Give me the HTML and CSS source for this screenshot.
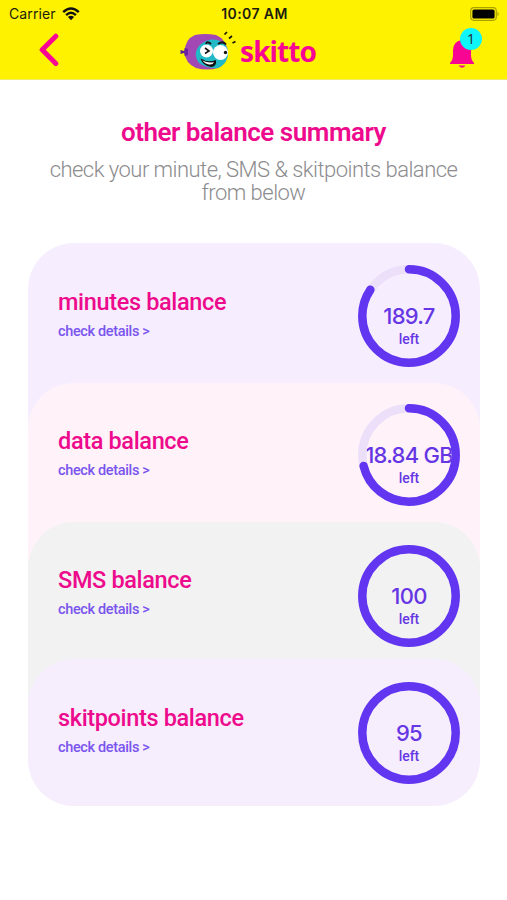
FILE: index.html
```html
<!DOCTYPE html>
<html lang="en">
<head>
<meta charset="utf-8">
<title>skitto – other balance summary</title>
<link rel="stylesheet" href="styles.css">
</head>
<body>
<header class="top">
  <div class="status">
    <div class="carrier"><span>Carrier</span>
      <svg width="18" height="14" viewBox="0 0 18 14"><g fill="none" stroke="#111" stroke-width="2.4"><path d="M1.2 5.2Q9-2.2 16.8 5.2"/><path d="M4.1 8.1Q9 3.5 13.9 8.1"/></g><path d="M5.9 10Q9 7.4 12.1 10L9 13.2Z" fill="#111"/></svg>
    </div>
    <span class="clock">10:07 AM</span>
    <svg class="battery" width="30" height="14" viewBox="0 0 30 14"><rect x=".7" y=".7" width="25.6" height="12.6" rx="3.2" fill="none" stroke="#aaa000" stroke-width="1.2"/><rect x="2.4" y="2.4" width="22.2" height="9.2" rx="1.6" fill="#000"/><path d="M27.5 4.5Q30 7 27.5 9.5Z" fill="#aaa000"/></svg>
  </div>
  <nav class="nav">
    <svg class="back" width="20" height="34" viewBox="0 0 20 34"><path d="M16.8 3.2L3.2 16.8L16.8 30.4" fill="none" stroke="#f90594" stroke-width="5" stroke-linecap="round" stroke-linejoin="round"/></svg>
    <div class="brand">
      <svg width="58" height="42" viewBox="0 0 58 42">
        <path d="M4 21L.5 20V24L4 23L7 28L10 22L7 17Z" fill="#5b2093"/>
        <path d="M15 5Q25 3 36 5Q46 9 48 22Q47 34 38 38Q27 41 16 38Q5 33 4.500 22Q5 9 15 5Z" fill="#a347b5"/>
        <path d="M4.500 18L8 19V25L4.500 26Z" fill="#6a22a3"/>
        <path d="M20 15Q31 6 42 12Q49 17 48 25Q47 34 38 38Q27 39 19 33Q12 23 20 15Z" fill="#22b9c6"/>
        <circle cx="26.500" cy="21" r="6.500" fill="#fff"/><circle cx="40.500" cy="22.500" r="7.500" fill="#fff"/>
        <path d="M25 18L29 21L25 23.500" fill="none" stroke="#151515" stroke-width="1.600"/>
        <circle cx="45.500" cy="22.500" r="1.700" fill="#111"/>
        <path d="M26 14Q27 10.500 31 14M38 14Q43 10.500 46 14.500" fill="none" stroke="#151515" stroke-width="2"/>
        <path d="M20.500 28.500Q28 33 36 30Q37 36.500 31 37Q23 36 20.500 28.500Z" fill="#111"/><path d="M22.500 30.500Q28 33.500 34 32Q33 35 29 34.500Q25 34 22.500 30.500Z" fill="#fff"/>
        <path d="M44.500 4.500L47 2M49 8.500L52 6M52.500 13L55.500 11.500" stroke="#171700" stroke-width="1.700"/>
      </svg>
      <span class="wordmark">skitto</span>
    </div>
    <div class="alerts">
      <svg width="24" height="28" viewBox="0 0 24 28"><path d="M12 0Q3.500 1 3 10V16Q3 20 0 23V24H24V23Q21 20 21 16V10Q20.500 1 12 0Z" fill="#f90594"/><path d="M8.500 25.500H15.500Q12 30 8.500 25.500Z" fill="#f90594"/></svg>
      <span class="badge">1</span>
    </div>
  </nav>
</header>
<main>
  <h1 class="title">other balance summary</h1>
  <div class="intro"><p>check your minute, SMS &amp; skitpoints balance</p><p>from below</p></div>
  <section class="cards">
    <article class="card minutes">
      <div class="info"><h2>minutes balance</h2><a>check details &gt;</a></div>
      <div class="gauge"><svg class="ring" viewBox="0 0 104 104"><circle class="track" cx="52" cy="52" r="46.700"/><circle class="bar" cx="52" cy="52" r="46.700" pathLength="100" stroke-dasharray="84.500 100"/></svg><div class="reading"><b>189.7</b><small>left</small></div></div>
    </article>
    <article class="card data">
      <div class="info"><h2>data balance</h2><a>check details &gt;</a></div>
      <div class="gauge"><svg class="ring" viewBox="0 0 104 104"><circle class="track" cx="52" cy="52" r="46.700"/><circle class="bar" cx="52" cy="52" r="46.700" pathLength="100" stroke-dasharray="71.200 100"/></svg><div class="reading"><b>18.84 GB</b><small>left</small></div></div>
    </article>
    <article class="card sms">
      <div class="info"><h2>SMS balance</h2><a>check details &gt;</a></div>
      <div class="gauge"><svg class="ring" viewBox="0 0 104 104"><circle class="bar" cx="52" cy="52" r="46.700"/></svg><div class="reading"><b>100</b><small>left</small></div></div>
    </article>
    <article class="card points">
      <div class="info"><h2>skitpoints balance</h2><a>check details &gt;</a></div>
      <div class="gauge"><svg class="ring" viewBox="0 0 104 104"><circle class="bar" cx="52" cy="52" r="46.700"/></svg><div class="reading"><b>95</b><small>left</small></div></div>
    </article>
  </section>
</main>
</body>
</html>
```

FILE: styles.css
```css
* { box-sizing: border-box; margin: 0; padding: 0; }
body { background: #fff; font-family: Roboto, "Noto Sans", sans-serif; height: 900px; overflow: hidden; }
svg { display: block; }
.top { height: 80px; background: #fff200; border-bottom: 1px solid #f3e96a; }
.status { height: 28px; padding: 0 7px 0 9px; display: grid; grid-template-columns: 1fr auto 1fr; align-items: center; font: 14px/28px Inter, sans-serif; color: #1c1c10; }
.carrier { display: flex; align-items: center; gap: 6px; letter-spacing: .1px; }
.clock { font-weight: 600; font-size: 14px; letter-spacing: .4px; }
.battery { justify-self: end; }
.nav { height: 50px; padding: 0 33px 0 39px; display: flex; align-items: center; }
.back { margin-top: -6px; }
.brand { display: flex; align-items: center; gap: 2px; margin: -4px 0 0 121px; }
.wordmark { color: #f90594; font: 700 28px/34px "Noto Sans", sans-serif; letter-spacing: -.9px; }
.alerts { position: relative; margin: 1px 0 0 auto; }
.badge { position: absolute; left: 10px; top: -12px; width: 22px; height: 22px; border-radius: 50%; background: #0ff6fa; color: #234; font: 14px/21px "Noto Sans", sans-serif; text-align: center; }
.title { margin-top: 36px; text-align: center; color: #ee0a8c; font-size: 26px; line-height: 32px; font-weight: 600; letter-spacing: -.48px; }
.intro { margin-top: 10px; text-align: center; color: #8c8c8e; font-size: 22px; line-height: 23px; font-weight: 300; letter-spacing: -.53px; }
.cards { margin: 39px 27px 0 28px; }
.card { height: 186px; border-radius: 46px 46px 0 0; padding: 21px 19px 0 30px; display: flex; justify-content: space-between; align-items: flex-start; }
.minutes { background: #f6eeff; }
.data { background: #fff3f9; margin-top: -46px; padding-top: 20px; }
.sms { background: #f2f2f2; margin-top: -47px; padding-top: 22px; }
.sms .info { padding-top: 21px; }
.points { background: #f6edfd; height: 147px; margin-top: -49px; padding-top: 22px; border-radius: 46px; }
.info { padding-top: 23px; }
.points .info { padding-top: 22px; }
.info h2 { color: #ee0a8c; font-size: 23.500px; line-height: 30px; font-weight: 550; white-space: nowrap; letter-spacing: -.35px; }
.info a { display: block; margin-top: 5px; color: #7a55ed; font-size: 14.500px; line-height: 20px; font-weight: 500; letter-spacing: -.35px; }
.gauge { width: 104px; height: 104px; display: grid; place-items: center; }
.gauge > * { grid-area: 1 / 1; }
.ring { width: 104px; height: 104px; transform: rotate(-90deg); }
.ring circle { fill: none; stroke-width: 8.500px; }
.track { stroke: #ecdff9; }
.bar { stroke: #6236f0; stroke-linecap: round; }
.reading { display: flex; flex-direction: column; align-items: center; color: #6636e4; padding-top: 19px; }
.reading b { font: 500 22px/26px Inter, sans-serif; white-space: nowrap; letter-spacing: -.75px; }
.reading small { font-size: 14px; line-height: 20px; font-weight: 500; letter-spacing: -.1px; }
```
